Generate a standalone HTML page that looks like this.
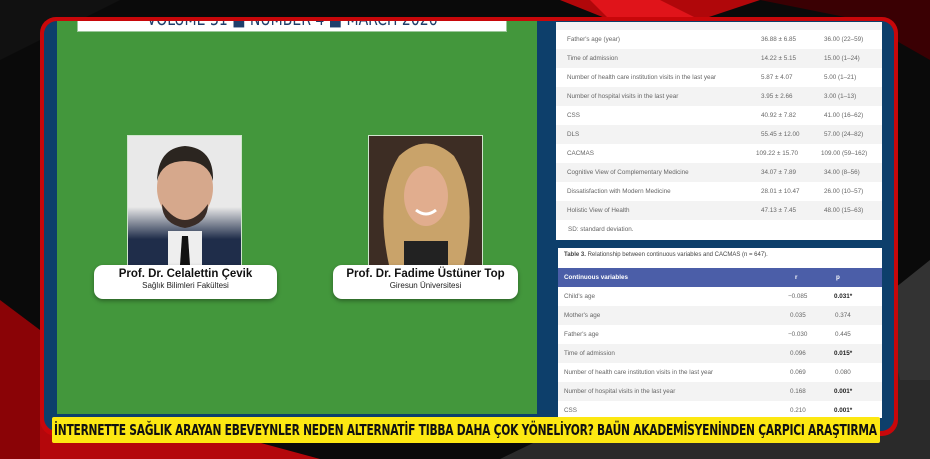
<!DOCTYPE html>
<html><head><meta charset="utf-8"><style>
*{margin:0;padding:0;box-sizing:border-box}
body{width:930px;height:459px;overflow:hidden;position:relative;background:#0b0b0b;font-family:"Liberation Sans",sans-serif}
.abs{position:absolute}
.frame{left:40px;top:17px;width:858px;height:419px;border-radius:16px;background:#c8070a}
.navy{left:44px;top:21px;width:850px;height:410px;border-radius:13px;background:#0d3f6b}
.green{left:57px;top:21px;width:480px;height:393px;background:#43973c;overflow:hidden}
.wbar{left:20px;top:-10px;width:430px;height:21px;background:#fff;border:1px solid #9bc79a;color:#1f3f6b;font-size:19px;text-align:center;line-height:15px;overflow:hidden;font-family:"DejaVu Sans Condensed","Liberation Sans",sans-serif;white-space:nowrap}
.wbar span{display:inline-block;transform:scaleX(0.82)}
.photo{top:135px;width:115px;height:131px;border:1px solid #cfe6cc}
.card{top:265px;height:34px;background:#fff;border-radius:9px;box-shadow:0 2px 4px rgba(0,0,0,.35);text-align:center}
.card b{display:block;font-size:11.5px;color:#111;margin-top:3px}
.card span{display:block;font-size:8px;color:#222;margin-top:1px}
.t1{left:556px;top:22px;width:326px;height:218px;background:#fff}
.t2{left:558px;top:248px;width:324px;height:170px;background:#fff}
.row{position:absolute;left:0;width:100%;height:19px;font-size:6.3px;color:#666;line-height:19px}
.row.alt{background:#f3f3f3}
.row .a{position:absolute;left:11px}
.row .b{position:absolute;left:0;width:100%}
.banner{left:52px;top:417px;width:828px;height:26px;background:#fde812;font-family:"DejaVu Sans Condensed","Liberation Sans",sans-serif;font-weight:bold;font-size:15px;line-height:26px;color:#111;white-space:nowrap;padding-left:2px;letter-spacing:-0.3px;border-radius:2px;overflow:hidden}
</style></head><body>
<svg class="abs" style="left:0;top:0" width="930" height="459">
<rect width="930" height="459" fill="#0a0a0a"/>
<polygon points="560,0 760,0 700,20 610,20" fill="#b0070a"/>
<polygon points="590,0 660,0 700,20 610,20" fill="#e0141a"/>
<polygon points="760,0 930,0 930,60 860,20" fill="#3a0003"/>
<polygon points="0,300 0,459 170,459 40,330" fill="#8a0306"/>
<polygon points="40,420 40,459 320,459 250,440" fill="#b4070b"/>
<polygon points="560,430 930,300 930,459 500,459" fill="#2a2a2a"/>
<polygon points="880,300 930,260 930,380 900,380" fill="#333"/>
<polygon points="0,0 120,0 0,60" fill="#111"/>
</svg>
<div class="abs frame"></div>
<div class="abs navy"></div>
<div class="abs green"><div class="abs wbar"><span>VOLUME 31 <span style="color:#1f3f6b;transform:none">■</span> NUMBER 4 ■ MARCH 2026</span></div></div>

<div class="abs photo" style="left:127px;background:linear-gradient(#e9e9e9 0,#e9e9e9 55%,#1f2d4a 80%,#1f2d4a 100%)">
<svg width="113" height="129"><rect x="40" y="95" width="34" height="34" fill="#eee"/><polygon points="54,100 60,100 62,129 52,129" fill="#111"/><ellipse cx="57" cy="52" rx="28" ry="34" fill="#d6a88c"/><path d="M29,45 Q30,12 57,10 Q86,12 85,45 Q80,25 57,25 Q34,25 29,45Z" fill="#2b2520"/><path d="M34,68 Q57,100 80,68 Q80,88 57,92 Q34,88 34,68Z" fill="#3a2c26"/></svg></div>
<div class="abs photo" style="left:368px;background:#3d2d24">
<svg width="113" height="129"><path d="M20,129 Q5,60 30,20 Q57,-5 85,20 Q110,60 95,129Z" fill="#c9a36a"/><ellipse cx="57" cy="60" rx="22" ry="30" fill="#e1ad8e"/><rect x="35" y="105" width="44" height="24" fill="#222"/><path d="M47,74 Q57,82 67,74" stroke="#fff" stroke-width="3" fill="none"/></svg></div>

<div class="abs card" style="left:94px;width:183px"><b>Prof. Dr. Celalettin Çevik</b><span>Sağlık Bilimleri Fakültesi</span></div>
<div class="abs card" style="left:333px;width:185px"><b>Prof. Dr. Fadime Üstüner Top</b><span>Giresun Üniversitesi</span></div>

<div class="abs t1">
<div class="row alt" style="top:0;height:8px"></div>
<div class="row" style="top:8px"><span class="a">Father's age (year)</span><span class="b" style="left:205px">36.88 ± 6.85</span><span class="b" style="left:268px">36.00 (22–59)</span></div>
<div class="row alt" style="top:27px"><span class="a">Time of admission</span><span class="b" style="left:205px">14.22 ± 5.15</span><span class="b" style="left:268px">15.00 (1–24)</span></div>
<div class="row" style="top:46px"><span class="a">Number of health care institution visits in the last year</span><span class="b" style="left:205px">5.87 ± 4.07</span><span class="b" style="left:268px">5.00 (1–21)</span></div>
<div class="row alt" style="top:65px"><span class="a">Number of hospital visits in the last year</span><span class="b" style="left:205px">3.95 ± 2.66</span><span class="b" style="left:268px">3.00 (1–13)</span></div>
<div class="row" style="top:84px"><span class="a">CSS</span><span class="b" style="left:205px">40.92 ± 7.82</span><span class="b" style="left:268px">41.00 (16–62)</span></div>
<div class="row alt" style="top:103px"><span class="a">DLS</span><span class="b" style="left:205px">55.45 ± 12.00</span><span class="b" style="left:268px">57.00 (24–82)</span></div>
<div class="row" style="top:122px"><span class="a">CACMAS</span><span class="b" style="left:200px">109.22 ± 15.70</span><span class="b" style="left:265px">109.00 (59–162)</span></div>
<div class="row alt" style="top:141px"><span class="a">Cognitive View of Complementary Medicine</span><span class="b" style="left:205px">34.07 ± 7.89</span><span class="b" style="left:268px">34.00 (8–56)</span></div>
<div class="row" style="top:160px"><span class="a">Dissatisfaction with Modern Medicine</span><span class="b" style="left:205px">28.01 ± 10.47</span><span class="b" style="left:268px">26.00 (10–57)</span></div>
<div class="row alt" style="top:179px"><span class="a">Holistic View of Health</span><span class="b" style="left:205px">47.13 ± 7.45</span><span class="b" style="left:268px">48.00 (15–63)</span></div>
<div class="row" style="top:198px"><span class="a" style="left:12px">SD: standard deviation.</span></div>
</div>

<div class="abs t2">
<div style="position:absolute;left:6px;top:4px;font-size:6px;color:#444"><b>Table 3.</b> Relationship between continuous variables and CACMAS (n = 647).</div>
<div class="row" style="top:20px;background:#4b5ea8;color:#fff;font-weight:bold"><span class="a" style="left:6px">Continuous variables</span><span class="b" style="left:237px">r</span><span class="b" style="left:278px">p</span></div>
<div class="row" style="top:39px"><span class="a" style="left:6px">Child's age</span><span class="b" style="left:230px">−0.085</span><span class="b" style="left:276px;color:#222;font-weight:bold">0.031*</span></div>
<div class="row alt" style="top:58px"><span class="a" style="left:6px">Mother's age</span><span class="b" style="left:232px">0.035</span><span class="b" style="left:277px">0.374</span></div>
<div class="row" style="top:77px"><span class="a" style="left:6px">Father's age</span><span class="b" style="left:230px">−0.030</span><span class="b" style="left:277px">0.445</span></div>
<div class="row alt" style="top:96px"><span class="a" style="left:6px">Time of admission</span><span class="b" style="left:232px">0.096</span><span class="b" style="left:276px;color:#222;font-weight:bold">0.015*</span></div>
<div class="row" style="top:115px"><span class="a" style="left:6px">Number of health care institution visits in the last year</span><span class="b" style="left:232px">0.069</span><span class="b" style="left:277px">0.080</span></div>
<div class="row alt" style="top:134px"><span class="a" style="left:6px">Number of hospital visits in the last year</span><span class="b" style="left:232px">0.168</span><span class="b" style="left:276px;color:#222;font-weight:bold">0.001*</span></div>
<div class="row" style="top:153px"><span class="a" style="left:6px">CSS</span><span class="b" style="left:232px">0.210</span><span class="b" style="left:276px;color:#222;font-weight:bold">0.001*</span></div>
</div>

<div class="abs banner"><span style="display:inline-block;transform:scaleX(0.792);transform-origin:left">İNTERNETTE SAĞLIK ARAYAN EBEVEYNLER NEDEN ALTERNATİF TIBBA DAHA ÇOK YÖNELİYOR? BAÜN AKADEMİSYENİNDEN ÇARPICI ARAŞTIRMA</span></div>
</body></html>
